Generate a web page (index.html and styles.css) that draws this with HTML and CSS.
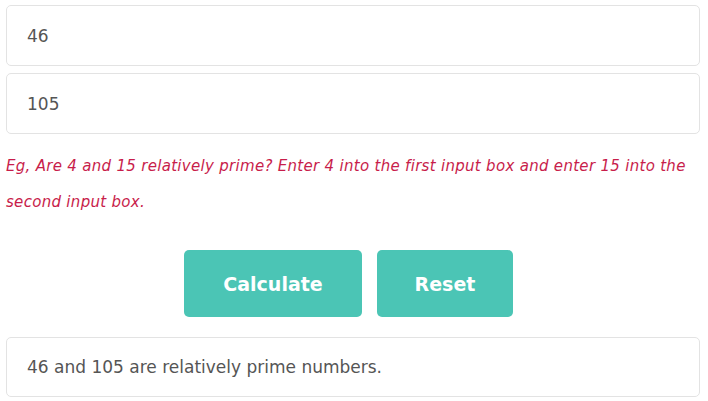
FILE: index.html
```html
<!DOCTYPE html>
<html lang="en">
<head>
  <meta charset="UTF-8">
  <meta name="viewport" content="width=device-width, initial-scale=1.0">
  <title>Relatively Prime Calculator</title>
  <link rel="stylesheet" href="styles.css">
</head>
<body>
  <div class="calc">
    <input type="text" class="field" value="46">
    <input type="text" class="field" value="105">
    <p class="hint">Eg, Are 4 and 15 relatively prime? Enter 4 into the first input box and enter 15 into the second input box.</p>
    <div class="actions">
      <button type="button" class="btn btn-calc">Calculate</button>
      <button type="button" class="btn btn-reset">Reset</button>
    </div>
    <div class="result">46 and 105 are relatively prime numbers.</div>
  </div>
</body>
</html>
```

FILE: styles.css
```css
* {
  margin: 0;
  padding: 0;
  box-sizing: border-box;
}

body {
  font-family: "DejaVu Sans", Arial, sans-serif;
  background-color: #ffffff;
}

.calc {
  display: flex;
  flex-direction: column;
  padding: 5px 8px 0 6px;
}

.field {
  width: 100%;
  height: 61px;
  padding: 0 20px;
  border: 1px solid #e3e3e3;
  border-radius: 5px;
  background-color: #fff;
  font-family: inherit;
  font-size: 17px;
  color: #555;
  margin-bottom: 7px;
}

.field:focus {
  outline: none;
}

.hint {
  margin-top: 7px;
  font-style: italic;
  font-size: 15px;
  letter-spacing: 0.3px;
  line-height: 36px;
  color: #c81d4b;
}

.actions {
  display: flex;
  justify-content: center;
  gap: 15px;
  margin-top: 30px;
  padding-right: 9px;
}

.btn {
  height: 67px;
  border: none;
  border-radius: 5px;
  background-color: #4bc5b5;
  color: #fff;
  font-family: inherit;
  font-size: 19px;
  font-weight: 600;
  cursor: pointer;
}

.btn-calc {
  width: 178px;
}

.btn-reset {
  width: 136px;
}

.result {
  margin-top: 20px;
  height: 60px;
  display: flex;
  align-items: center;
  padding: 0 20px;
  border: 1px solid #e3e3e3;
  border-radius: 5px;
  font-size: 17px;
  color: #555;
}
```
